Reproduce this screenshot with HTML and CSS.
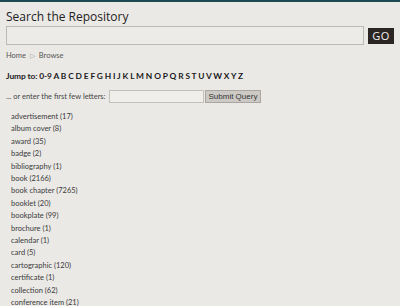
FILE: index.html
```html
<!doctype html>
<html lang="en">
<head>
  <meta charset="UTF-8">
  <title>Search the Repository</title>
  <link rel="stylesheet" href="styles.css">
</head>
<body>
<div class="topbar"></div>

<div class="page">
  <h2 class="search-title">Search the Repository</h2>
  <form class="search">
    <input class="search__input" type="text">
    <button class="search__go" type="button">GO</button>
  </form>

  <div class="crumbs">
    <span>Home</span>
    <span class="crumbs__sep">&#9655;</span>
    <span>Browse</span>
  </div>

  <p class="jump">
    Jump to: <a>0-9</a> <a>A</a> <a>B</a> <a>C</a> <a>D</a> <a>E</a> <a>F</a> <a>G</a> <a>H</a> <a>I</a> <a>J</a> <a>K</a> <a>L</a> <a>M</a> <a>N</a> <a>O</a> <a>P</a> <a>Q</a> <a>R</a> <a>S</a> <a>T</a> <a>U</a> <a>V</a> <a>W</a> <a>X</a> <a>Y</a> <a>Z</a>
  </p>

  <form class="starts">
    <label class="starts__label" for="starts">... or enter the first few letters:</label>
    <input class="starts__input" id="starts" type="text">
    <button class="starts__submit" type="button">Submit Query</button>
  </form>

  <ul class="types">
    <li>advertisement (17)</li>
    <li>album cover (8)</li>
    <li>award (35)</li>
    <li>badge (2)</li>
    <li>bibliography (1)</li>
    <li>book (2166)</li>
    <li>book chapter (7265)</li>
    <li>booklet (20)</li>
    <li>bookplate (99)</li>
    <li>brochure (1)</li>
    <li>calendar (1)</li>
    <li>card (5)</li>
    <li>cartographic (120)</li>
    <li>certificate (1)</li>
    <li>collection (62)</li>
    <li>conference item (21)</li>
  </ul>
</div>
</body>
</html>
```

FILE: styles.css
```css
html, body {
  margin: 0;
  height: 100%;
  overflow: hidden;
}

body {
  background: #ebe9e6;
  font-family: Lato, "Open Sans", sans-serif;
  color: #2a2a2a;
}

.topbar {
  height: 2px;
  background: #1d4a52;
}

.page {
  padding: 0 6px;
}

/* Search */

.search-title {
  margin: 8px 0 2px;
  font: normal 12px/14px "Open Sans", sans-serif;
  color: #222;
}

.search {
  display: flex;
  align-items: center;
  gap: 4px;
  margin: 0;
}

.search__input {
  box-sizing: border-box;
  width: 359px;
  height: 19px;
  margin: 0;
  border: 1px solid #bdbab6;
  background: #ecebe8;
}

.search__go {
  width: 26px;
  height: 16px;
  padding: 0;
  border: 0;
  background: #2b2523;
  color: #f4f2f0;
  font: 11px "Open Sans", sans-serif;
  letter-spacing: .5px;
}

/* Breadcrumbs */

.crumbs {
  margin-top: 5px;
  font-size: 7.5px;
  line-height: 10px;
  color: #555;
}

.crumbs__sep {
  margin: 0 2px;
  font-size: 7px;
  color: #999;
}

/* Jump to */

.jump {
  margin: 9px 0 0;
  font-size: 8.4px;
  line-height: 12px;
  font-weight: bold;
  color: #1b1b1b;
  letter-spacing: -.1px;
}

.starts {
  display: flex;
  align-items: center;
  margin: 8px 0 0;
  font-size: 7.5px;
  color: #444;
}

.starts__label {
  margin-right: 3px;
}

.starts__input {
  box-sizing: border-box;
  width: 95px;
  height: 13px;
  margin: 0;
  border: 1px solid #c4c1bd;
  background: #efeeeb;
}

.starts__submit {
  height: 13px;
  margin-left: 1px;
  padding: 0 3px;
  border: 1px solid #a9a6a2;
  background: #cdcac6;
  color: #333;
  font: 8px "Liberation Sans", sans-serif;
}

/* Item types */

.types {
  margin: 8px 0 0;
  padding-left: 5px;
  list-style: none;
  font-size: 7.5px;
  line-height: 12.4px;
  color: #3a3a3a;
}
```
